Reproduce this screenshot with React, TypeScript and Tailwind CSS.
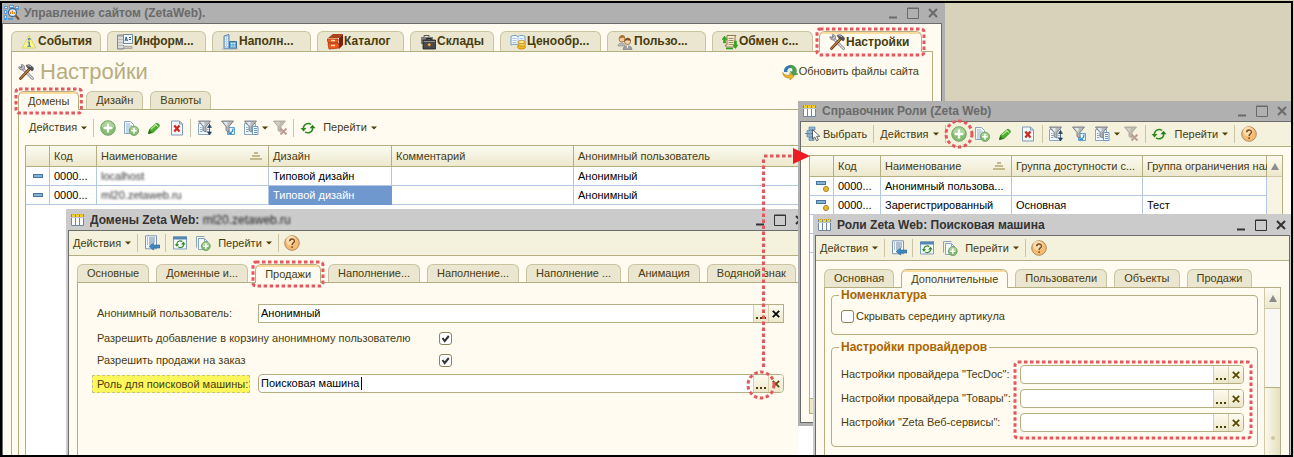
import React, { useId, type ReactNode } from "react";

/* ---------- icons ---------- */

function Svg({ children }: { children: ReactNode }) {
  return (
    <svg width="16" height="16" viewBox="0 0 16 16" aria-hidden="true" className="shrink-0">
      {children}
    </svg>
  );
}

const AppIcon = () => (
  <Svg>
    <path d="M0 1h4v3H0zM5 0h5v3H5zM11 1h4v4h-4zM0 5h3v4H0zM0 10h3v5H0zM4 13h5v2H4z" fill="#5b9bd5" />
    <path d="M1 2h2v1H1zM6 1h3v1H6zM12 2h2v1h-2zM1 6h1v2H1zM1 11h1v2H1z" fill="#d9ecfb" />
    <circle cx="8.500" cy="7.500" r="4" fill="#e8f4ff" stroke="#40698f" strokeWidth="1.300" />
    <path d="M6.500 9V6.500M8.500 9V5.500M10.500 9V7" stroke="#d98324" strokeWidth="1.200" />
    <path d="M11.500 10.500l3.500 4" stroke="#7a5230" strokeWidth="2" />
  </Svg>
);

const TableIcon = () => (
  <Svg>
    <path d="M1.500 2.500h12v11h-12z" fill="#fff" stroke="#6d87a3" />
    <path d="M5.500 3v11M9.500 3v11" stroke="#6d87a3" />
    <path d="M2 2h3v3H2zM6 2h3v3H6zM10 2h3v3h-3z" fill="#f2d02e" />
    <path d="M1 5.500h13" stroke="#b9c7d6" />
    <path d="M1 2.500h13" stroke="#c29a1a" strokeDasharray="1 1" />
  </Svg>
);

const WarnIcon = () => (
  <Svg>
    <path d="M8 1.500L14.800 14H1.200z" fill="#fbf78c" stroke="#d8d26a" strokeLinejoin="round" />
    <path d="M7.500 4.500h1.500v1.500H7.500zM6.500 8h2v4M6.300 12.300h3.800" stroke="#4a80bd" strokeWidth="1" fill="none" />
    <path d="M8.300 8v4" stroke="#4a80bd" strokeWidth="1.400" />
  </Svg>
);

const InfoIcon = () => (
  <Svg>
    <path d="M.5 1h6v14h-6z" fill="#b9b9b9" stroke="#8a8a8a" />
    <path d="M1 4h5M1 7h5M1 10h5M1 13h14M6 10.500h9" stroke="#fff" />
    <path d="M6.500.5h9v9h-9z" fill="#eef5fb" stroke="#6f8ba6" />
    <path d="M8 7l1.200-4L10.500 7M8.500 6h1.600" stroke="#2f5d8c" fill="none" />
    <path d="M12 3.500h2M12 5.500h2" stroke="#2f5d8c" />
    <path d="M7 12.500h8v2H7z" fill="#c9c9c9" stroke="#8a8a8a" strokeWidth=".6" />
  </Svg>
);

const BuildingIcon = () => (
  <Svg>
    <path d="M2 14.500V2l5-1.500v14z" fill="#b5cfe8" stroke="#5f86ad" />
    <path d="M3.500 3v10M5.500 3v10" stroke="#f2f8fd" strokeDasharray="1.500 1" />
    <path d="M7.500 7.500h7v7h-7z" fill="#6aabd4" stroke="#3c769f" />
    <path d="M9 9.500h4.500M9 12h4.500" stroke="#e6f4fc" strokeWidth="1.200" strokeDasharray="1.500 1" />
    <path d="M0 15h16" stroke="#a5b3c0" />
  </Svg>
);

const DrawerIcon = () => (
  <Svg>
    <path d="M1 4l5-4h10l-4 4z" fill="#a9431b" />
    <path d="M12 4l4-4v11l-4 4z" fill="#7d1c14" />
    <path d="M0 5h11v3.500H1zM1 9.500h11V14L2 15z" fill="#f0581c" stroke="#b3330b" strokeWidth=".8" />
    <path d="M4 6.500h4M4 11.500h4" stroke="#ffe1a6" strokeWidth="1.400" />
  </Svg>
);

const CaseIcon = () => (
  <Svg>
    <path d="M4 3V1.500h5V3" stroke="#555" fill="none" />
    <path d="M1 3h12v7H1z" fill="#7d7d7d" />
    <path d="M7 6V4.500h4V6" stroke="#222" fill="none" strokeWidth="1.200" />
    <path d="M3 6h12.500v9H3z" fill="#4a4a4a" stroke="#222" strokeWidth=".8" />
    <path d="M3.500 7.500h11.500" stroke="#8e8e8e" />
    <path d="M9.200 9l1.800 1.800-1.800 1.800-1.800-1.800z" fill="#f3b233" />
  </Svg>
);

const PriceIcon = () => (
  <Svg>
    <path d="M1 2.500C3 1 6 1 8 2.500c2-1.500 5-1.500 7 0V11c-2-1-5-1-7 0-2-1-5-1-7 0z" fill="#eff6fc" stroke="#6b9cc7" />
    <path d="M8 2.500V11M2.500 4.500h4M2.500 6.500h4M2.500 8.500h4M9.500 4.500h4" stroke="#9bbddb" strokeWidth=".8" />
    <ellipse cx="11.500" cy="13" rx="4" ry="2" fill="#f5b921" stroke="#b97a0a" strokeWidth=".7" />
    <ellipse cx="12" cy="10.500" rx="3.600" ry="1.800" fill="#fbd251" stroke="#b97a0a" strokeWidth=".7" />
    <ellipse cx="11.500" cy="8" rx="3.400" ry="1.700" fill="#fde58b" stroke="#b97a0a" strokeWidth=".7" />
  </Svg>
);

const UsersIcon = () => (
  <Svg>
    <path d="M1 12c0-4 7-4 7 0z" fill="#b8b8b8" stroke="#888" strokeWidth=".6" />
    <circle cx="5" cy="5" r="3" fill="#f5c99a" stroke="#8a5a2a" strokeWidth=".7" />
    <path d="M2 5c0-5 6-5 6-1.500C6 4 4 3 2 5z" fill="#a8702e" />
    <path d="M6 15.500c0-5 9-5 9 0z" fill="#9d9d9d" stroke="#777" strokeWidth=".6" />
    <path d="M9.500 11.500l1 3 1-3z" fill="#fff" />
    <circle cx="10.500" cy="7.500" r="3" fill="#f8d3a8" stroke="#7b4c20" strokeWidth=".7" />
    <path d="M7.500 7.500c0-5 6.500-5 6.500 0-2-1-4-2-6.500 0z" fill="#7c4e24" />
  </Svg>
);

const ExchangeIcon = () => (
  <Svg>
    <path d="M5 1.500h9c-1 1-1 2-1 3V13H5c-1.500 0-2-1-1.500-2H5z" fill="#f3ead0" stroke="#8e774c" />
    <path d="M6.500 4.500h5M6.500 6.500h5M6.500 8.500h5M6.500 10.500h5" stroke="#a08a5e" />
    <path d="M1.500 9V5.500H0L2.500 2 5 5.500H3.500V9z" fill="#35a51f" stroke="#1d9a10" strokeWidth=".5" />
    <path d="M14.500 7v4H16l-2.500 3.500L11 11h1.500V7z" fill="#35a51f" stroke="#1d9a10" strokeWidth=".5" />
    <path d="M4 14.500h7" stroke="#2f9c1c" strokeWidth="1.400" />
  </Svg>
);

const ToolsIcon = () => (
  <Svg>
    <path d="M3.500 3.500l11 11" stroke="#77777f" strokeWidth="2.600" strokeLinecap="round" />
    <path d="M4 4l10.500 10.500" stroke="#e2e2e6" strokeWidth="1.300" strokeLinecap="round" />
    <path d="M1 2.500L3 4.300 4.600 2.800 3 .8c2-.8 4.200.9 3.400 3.300-.6 1.800-3 2.400-4.400 1.200C.9 4.500.6 3.500 1 2.500z" fill="#c9c9cf" stroke="#55555c" strokeWidth=".6" />
    <path d="M11.500 5L2.500 14.500" stroke="#5a2f12" strokeWidth="2.600" strokeLinecap="round" />
    <path d="M11 5.500l-8.500 8.800" stroke="#c98446" strokeWidth="1.200" strokeLinecap="round" />
    <path d="M8 1.500c2-1.200 4-1 5.500.5l2 2-.5 2.500-1.500.3L12.500 5 10 4.500z" fill="#55555b" stroke="#333338" strokeWidth=".5" />
    <path d="M9.500 1.800c1.200-.4 2.300-.1 3.500 1" stroke="#d5d5da" strokeWidth=".9" fill="none" />
  </Svg>
);

const UpdateIcon = () => (
  <Svg>
    <circle cx="8" cy="7.500" r="6.500" fill="#e9f4f0" />
    <path d="M2 8C1.500 3 6 .5 10 1.500L8.500 4C6 4 5 6 5.500 8z" fill="#3c78b4" />
    <path d="M8 1.300c5-.5 7.500 4 6 8.200l2 .5-5 1.500L8.500 7.500l2 .6C11.500 5 10 3.500 8 3.500z" fill="#4aa54a" stroke="#2b7a39" strokeWidth=".5" />
    <path d="M.7 8.500c1 2.500 4 3.500 7.300 2.500V8.500l4 4-4 3.300v-2C4 14.500 1 12.500.7 8.500z" fill="#f0b428" stroke="#b37a0c" strokeWidth=".6" />
  </Svg>
);

const PlusGlyph = ({ cx, cy, r }: { cx: number; cy: number; r: number }) => (
  <g>
    <circle cx={cx} cy={cy} r={r} fill="#84bd70" stroke="#6f9c64" strokeWidth=".9" />
    <path d={`M${cx - r + 1} ${cy - 0.5}a${r - 1} ${r - 1} 0 0 1 ${2 * r - 2} 0z`} fill="#a9d398" />
    <path d={`M${cx - r * 0.6} ${cy}h${r * 1.2}M${cx} ${cy - r * 0.6}v${r * 1.2}`} stroke="#fff" strokeWidth={r > 5 ? 2.4 : 1.6} />
  </g>
);

const AddIcon = () => (
  <Svg>
    <PlusGlyph cx={8} cy={8} r={7.3} />
  </Svg>
);

const CopyIcon = () => (
  <Svg>
    <path d="M1.500 1.500h6l3 3v9h-9z" fill="#f3f8fc" stroke="#8aa5bf" />
    <path d="M3 4h4M3 6h6M3 8h6M3 10h4M3 12h3" stroke="#9bb3c9" />
    <PlusGlyph cx={11} cy={10.8} r={4.6} />
  </Svg>
);

const CopyFormIcon = () => (
  <Svg>
    <path d="M1.500 12.500V1.500h8" fill="none" stroke="#8aa5bf" />
    <path d="M3.500 3.500h6l3 3v8h-9z" fill="#f3f8fc" stroke="#8aa5bf" />
    <path d="M9.500 3.500v3h3" fill="none" stroke="#8aa5bf" />
    <PlusGlyph cx={10.8} cy={11.2} r={4.4} />
  </Svg>
);

const PencilIcon = () => (
  <Svg>
    <path d="M2.500 13.500l1.200-4.500 6.500-5.500c2-.5 3.500 1 3 3L7 12.500z" fill="#4bb02c" stroke="#2a8a14" strokeWidth=".8" />
    <path d="M5 9l5.500-4.500" stroke="#b4ea8f" strokeWidth="1.400" />
    <path d="M2 14l1.200-4 3 2.700z" fill="#2c6f18" />
    <path d="M9.500 4.500l3 2.500" stroke="#e0f7cf" strokeWidth=".9" />
  </Svg>
);

const DeleteIcon = () => (
  <Svg>
    <path d="M2.500 1h8l3 3v11h-11z" fill="#f4f8fc" stroke="#7f99b5" />
    <path d="M10.500 1v3h3" fill="none" stroke="#7f99b5" />
    <path d="M5.300 5.500l5.200 6M10.500 5.500l-5.200 6" stroke="#cc2a1c" strokeWidth="2.200" />
  </Svg>
);

const Funnel = ({ grey = false }: { grey?: boolean }) => (
  <g>
    <path
      d="M1.500 1h12L9 6.500v5.500l-3-1.500V6.500z"
      fill={grey ? "#bdbab0" : "#b4b9bd"}
      stroke={grey ? "#aaa79c" : "#74797e"}
      strokeWidth=".9"
    />
    <path d="M3.500 2h4v3.500H6z" fill={grey ? "#d3d0c8" : "#e4e7ea"} />
  </g>
);

const Page = () => (
  <g>
    <path d="M1.500 3.500h11v11h-11z" fill="#f3f8fc" stroke="#88a7c4" />
    <path d="M3 7.500h1.500M3 9.500h2.500M3 11.500h2.500M10 9.500h1.500M9.500 11.500h2" stroke="#88a7c4" />
  </g>
);

const FilterSetIcon = () => (
  <Svg>
    <Page />
    <Funnel />
    <path d="M12.500 6.500v6M10.500 12h4l-2 3zM10.500 7.500h4l-2-3z" fill="#24405c" stroke="#24405c" strokeWidth=".6" />
  </Svg>
);

const FilterValueIcon = () => (
  <Svg>
    <path d="M7.500 7.500h7v7h-7z" fill="#e8f4fc" stroke="#5aa0d0" />
    <path d="M10 12.500c2 0 3-1 3-4M9 10.500v3h3" stroke="#3b8bc8" strokeWidth="1.200" fill="none" />
    <Funnel />
  </Svg>
);

const FilterListIcon = () => (
  <Svg>
    <Page />
    <Funnel />
    <path d="M9.500 6.500h5.500v8H9.500z" fill="#f1f7fc" stroke="#6e9ac2" />
    <path d="M11 8.500h3M11 10.500h3M11 12.500h3" stroke="#6e9ac2" />
  </Svg>
);

const FilterOffIcon = () => (
  <Svg>
    <Funnel grey />
    <path d="M8.500 8.500l6 6M14.500 8.500l-6 6" stroke="#bd9a93" strokeWidth="1.800" />
  </Svg>
);

const RefreshGlyph = () => (
  <g>
    <path d="M3.500 9V7C4.500 3.500 8.500 2.500 11 4.500" stroke="#2d8a1d" strokeWidth="1.600" fill="none" />
    <path d="M.5 8h6l-3 3.500z" fill="#2d8a1d" />
    <path d="M12.500 8v1.800C11.500 13 7.500 13.500 5 11.800" stroke="#2d8a1d" strokeWidth="1.600" fill="none" />
    <path d="M15.500 8.300h-6l3-3.500z" fill="#2a7d1b" />
  </g>
);

const RefreshIcon = () => (
  <Svg>
    <RefreshGlyph />
  </Svg>
);

const RefreshFormIcon = () => (
  <Svg>
    <path d="M1.500 2h13v12h-13z" fill="#f4f8fb" stroke="#7f9fbc" />
    <path d="M1 1.500h14v3H1z" fill="#5586b1" />
    <g transform="translate(2.400 3.400) scale(.72)">
      <RefreshGlyph />
    </g>
  </Svg>
);

const WriteIcon = () => (
  <Svg>
    <path d="M1.500.8h11v13h-11z" fill="#f4f8fc" stroke="#7b97b4" />
    <path d="M3 3h1M5 3h6M3 5h1M5 5h6M3 7h1M5 7h6M3 9h1M5 9h3" stroke="#6c87a3" />
    <path d="M5 11.500L9.500 8v2H16v3H9.500v2z" fill="#3f86bd" stroke="#2d6a9b" strokeWidth=".6" />
  </Svg>
);

const SelectIcon = () => (
  <Svg>
    <path d="M4 1h6v3H4zM2 4.500h7v3H2zM2 8h7v3H2zM4 11.500h5v3H4z" fill="#8fb5d2" stroke="#5a85aa" strokeWidth=".7" />
    <path d="M0 7.500h3" stroke="#5a85aa" />
    <path d="M7.500 3.500v9.500l2.300-2 1.700 3.800 1.800-.8-1.700-3.700h3.200z" fill="#fff" stroke="#444" strokeWidth=".8" />
  </Svg>
);

const HelpIcon = () => (
  <Svg>
    <circle cx="8" cy="8" r="7.300" fill="#f6bc72" stroke="#b08a60" />
    <circle cx="7" cy="5.500" r="4.800" fill="#fbdcae" />
    <path d="M5.700 6.300c0-3 4.800-3 4.800-.3C10.500 8 8.100 7.800 8.100 10M8.100 11.200v1.700" stroke="#7c4f22" strokeWidth="1.500" fill="none" />
  </Svg>
);

const SortIcon = () => (
  <svg width="12" height="8" viewBox="0 0 12 8" aria-hidden="true" className="shrink-0">
    <path d="M4 0h4v2H4zM2 3h8v2H2zM0 6h12v2H0z" fill="#c3ba8c" />
  </svg>
);

const RowIcon = ({ dot = false }: { dot?: boolean }) => (
  <svg width="16" height="14" viewBox="0 0 16 14" aria-hidden="true" className="mx-auto">
    <rect x={dot ? 2.5 : 3.5} y={dot ? 2.5 : 5.5} width="9" height="3" fill="#86b3d1" stroke="#47749b" />
    {dot && <circle cx="12" cy="10" r="2.500" fill="#eebd2c" stroke="#a8801a" />}
  </svg>
);

const Caret = () => (
  <svg width="6" height="4" viewBox="0 0 6 4" aria-hidden="true" className="shrink-0">
    <path d="M0 .5h6L3 3.500z" fill="#4d3f00" />
  </svg>
);

/* ---------- callouts ---------- */

const dots = { fill: "none", stroke: "#e4575d", strokeWidth: 3, strokeDasharray: "3.500 2.500" };

function Outline({ className }: { className: string }) {
  return (
    <span className={`pointer-events-none absolute z-10 p-[2px] ${className}`}>
      <svg width="100%" height="100%" className="block overflow-visible" aria-hidden="true">
        <rect width="100%" height="100%" rx="3" {...dots} />
      </svg>
    </span>
  );
}

function Ring({ className }: { className: string }) {
  return (
    <svg viewBox="0 0 30 30" aria-hidden="true" className={`pointer-events-none absolute z-10 size-[30px] ${className}`}>
      <circle cx="15" cy="15" r="13" {...dots} />
    </svg>
  );
}

/* ---------- window chrome ---------- */

function TitleBar({ icon, children, dim = false, tall = false }: { icon: ReactNode; children: ReactNode; dim?: boolean; tall?: boolean }) {
  return (
    <header
      className={`flex shrink-0 items-center gap-1 pl-[2px] ${tall ? "h-[21px]" : "h-5"} ${
        dim ? "bg-[#b0b0b0] text-[#6a6a6a]" : "bg-[#cbcbcb] text-[#333]"
      }`}
    >
      {icon}
      <h1 className="flex-1 truncate text-[12px] leading-5 font-bold">{children}</h1>
      <span className="flex gap-2 pr-[3px]">
        <button type="button" aria-label="Свернуть">
          <svg width="12" height="12" viewBox="0 0 12 12"><path d="M2 10.500h8" stroke="currentColor" strokeWidth="2" /></svg>
        </button>
        <button type="button" aria-label="Развернуть">
          <svg width="12" height="12" viewBox="0 0 12 12"><path d="M.5 1h11v10.500H.5zM.5 1.500h11" fill="none" stroke="currentColor" /></svg>
        </button>
        <button type="button" aria-label="Закрыть">
          <svg width="12" height="12" viewBox="0 0 12 12"><path d="M2 2l8 8M10 2l-8 8" stroke="currentColor" strokeWidth="2" /></svg>
        </button>
      </span>
    </header>
  );
}

type TabItem = { label: string; icon?: ReactNode; width?: string; active?: boolean; outlined?: boolean };

function Tabs({ items, large = false }: { items: TabItem[]; large?: boolean }) {
  return (
    <nav role="tablist" className={`flex shrink-0 items-start ${large ? "h-5 gap-[6px]" : "h-[18px] gap-[7px]"}`}>
      {items.map((t, i) => (
        <div key={i} className={`relative shrink-0 ${t.width ?? ""}`}>
          <button
            type="button"
            role="tab"
            aria-selected={!!t.active}
            className={`relative flex w-full items-center overflow-hidden rounded-t-[6px] border border-b-0 px-[9px] whitespace-nowrap ${
              large ? "gap-[1px] text-[12px] font-bold" : ""
            } ${
              t.active
                ? `border-[#b5ae80] bg-[#fffbf0] ${large ? "h-[21px]" : "h-[19px]"}`
                : `border-[#c9c3a0] bg-[#ebe6cf] ${large ? "h-5" : "h-[18px]"}`
            }`}
          >
            {t.active && <span className="absolute inset-x-0 top-0 h-[2px] bg-[#fbdc9c]" />}
            {t.icon}
            {t.label}
          </button>
          {t.outlined && <Outline className="-inset-[4px] -bottom-[5px]" />}
        </div>
      ))}
    </nav>
  );
}

const Sep = () => <span className="mx-[2px] h-[18px] w-px shrink-0 bg-[#cbc5a5]" />;

function Tool({ label, children, ring = false }: { label: string; children: ReactNode; ring?: boolean }) {
  return (
    <button type="button" aria-label={label} className="relative grid h-6 w-[23px] shrink-0 place-items-center">
      {children}
      {ring && <Ring className="-top-[3px] -left-[4px]" />}
    </button>
  );
}

function MenuButton({ children }: { children: ReactNode }) {
  return (
    <button type="button" className="flex h-6 shrink-0 items-center gap-1 px-1">
      {children}
      <Caret />
    </button>
  );
}

function ListTools({ ring = false }: { ring?: boolean }) {
  return (
    <>
      <MenuButton>Действия</MenuButton>
      <Sep />
      <Tool label="Добавить" ring={ring}><AddIcon /></Tool>
      <Tool label="Скопировать"><CopyIcon /></Tool>
      <Tool label="Изменить"><PencilIcon /></Tool>
      <Tool label="Удалить"><DeleteIcon /></Tool>
      <Sep />
      <Tool label="Отбор и сортировка"><FilterSetIcon /></Tool>
      <Tool label="Отбор по значению"><FilterValueIcon /></Tool>
      <Tool label="История отборов"><FilterListIcon /></Tool>
      <Caret />
      <Tool label="Отключить отбор"><FilterOffIcon /></Tool>
      <Sep />
      <Tool label="Обновить"><RefreshIcon /></Tool>
      <MenuButton>Перейти</MenuButton>
    </>
  );
}

function FormToolbar() {
  return (
    <div className="flex h-[25px] shrink-0 items-center border-b border-[#b5ae80] bg-[#f4f1dc]">
      <MenuButton>Действия</MenuButton>
      <Sep />
      <Tool label="Записать"><WriteIcon /></Tool>
      <Sep />
      <Tool label="Перечитать"><RefreshFormIcon /></Tool>
      <Tool label="Скопировать"><CopyFormIcon /></Tool>
      <MenuButton>Перейти</MenuButton>
      <Sep />
      <Tool label="Справка"><HelpIcon /></Tool>
    </div>
  );
}

/* ---------- tables ---------- */

const th =
  "h-[21px] border-r border-b border-[#b5ae80] bg-linear-to-b from-[#fbfaf1] to-[#ede8cc] pl-1 text-left font-normal whitespace-nowrap";
const td = "h-[19px] border-r border-b border-[#b4c8e4] pl-1 whitespace-nowrap text-black";

const SortedHead = ({ children }: { children: ReactNode }) => (
  <span className="flex items-center justify-between pr-[6px]">
    {children}
    <SortIcon />
  </span>
);

const domains = ["localhost", "ml20.zetaweb.ru"];

function DomainsTable() {
  return (
    <table className="w-full table-fixed border-separate border-spacing-0">
      <thead>
        <tr>
          <th className={`${th} w-6`} />
          <th className={`${th} w-[47px]`}>Код</th>
          <th className={`${th} w-[172px]`}><SortedHead>Наименование</SortedHead></th>
          <th className={`${th} w-[123px]`}>Дизайн</th>
          <th className={`${th} w-[182px]`}>Комментарий</th>
          <th className={th}>Анонимный пользователь</th>
        </tr>
      </thead>
      <tbody>
        {domains.map((name, i) => (
          <tr key={name}>
            <td className="h-[19px] border-r border-b border-[#b4c8e4]"><RowIcon /></td>
            <td className={td}>0000...</td>
            <td className={td}><span className="text-[#333] blur-[1px]">{name}</span></td>
            <td className={i === 1 ? "h-[19px] border-r border-b border-[#6f98cf] bg-[#6f98cf] pl-1 text-white" : td}>Типовой дизайн</td>
            <td className={td} />
            <td className={td}>Анонимный</td>
          </tr>
        ))}
      </tbody>
    </table>
  );
}

const roles = [
  ["0000...", "Анонимный пользова...", "", ""],
  ["0000...", "Зарегистрированный", "Основная", "Тест"],
  ["", "", "", ""],
  ["", "", "", ""],
];

function RolesTable() {
  return (
    <table className="w-full table-fixed border-separate border-spacing-0">
      <thead>
        <tr>
          <th className={`${th} w-6`} />
          <th className={`${th} w-[47px]`}>Код</th>
          <th className={`${th} w-[131px]`}><SortedHead>Наименование</SortedHead></th>
          <th className={`${th} w-[131px]`}>Группа доступности с...</th>
          <th className={th}>Группа ограничения нал</th>
        </tr>
      </thead>
      <tbody>
        {roles.map((row, i) => (
          <tr key={i}>
            <td className="h-[19px] border-r border-b border-[#b4c8e4]">{row[0] && <RowIcon dot />}</td>
            {row.map((c, j) => (
              <td key={j} className={td}>{c}</td>
            ))}
          </tr>
        ))}
      </tbody>
    </table>
  );
}

/* ---------- form controls ---------- */

function Field({ label, value = "", square = false, wide = false, focused = false, ring = false }: {
  label: string; value?: string; square?: boolean; wide?: boolean; focused?: boolean; ring?: boolean;
}) {
  const id = useId();
  return (
    <div className="flex h-[19px] items-center">
      <div className={`shrink-0 whitespace-nowrap ${wide ? "w-[179px]" : "w-[161px]"}`}>
        <label
          htmlFor={id}
          className={focused ? "-ml-[5px] inline-block border border-dashed border-[#c9c48a] bg-[#fdf75c] pr-px pl-1 leading-4" : ""}
        >
          {label}
        </label>
      </div>
      <div className={`relative flex h-[19px] min-w-0 flex-1 border border-[#b5ae80] bg-white ${square ? "" : "rounded-[4px]"}`}>
        <input id={id} defaultValue={value} className="min-w-0 flex-1 bg-transparent pl-[2px] text-black outline-none" />
        {focused && <span className="absolute top-[2px] left-[102px] h-[13px] w-px bg-black" />}
        <button type="button" aria-label="Выбрать" className="grid w-[15px] place-items-end justify-center border-l border-[#d5cfae] bg-linear-to-b from-[#fdfbf1] to-[#ece7cb] pb-[3px]">
          <svg width="11" height="2" viewBox="0 0 11 2"><path d="M0 0h2v2H0zM4 0h2v2H4zM8 0h2v2H8z" fill="#4d3f00" /></svg>
        </button>
        <button type="button" aria-label="Очистить" className={`grid w-[15px] place-items-center border-l border-[#d5cfae] bg-linear-to-b from-[#fdfbf1] to-[#ece7cb] ${square ? "text-black" : "rounded-r-[3px] text-[#5a4800]"}`}>
          <svg width="8" height="8" viewBox="0 0 8 8"><path d="M.8.8l6.400 6.400M7.200.8L.8 7.200" stroke="currentColor" strokeWidth="1.800" /></svg>
        </button>
        {ring && <Ring className="-top-[5px] right-[7px]" />}
      </div>
    </div>
  );
}

function CheckBox({ id, checked = false }: { id: string; checked?: boolean }) {
  return (
    <span className="relative size-[13px] shrink-0">
      <input id={id} type="checkbox" defaultChecked={checked} className="peer block size-[13px] appearance-none rounded-[3px] border border-[#8f8657] bg-white" />
      <svg viewBox="0 0 13 13" aria-hidden="true" className="pointer-events-none absolute inset-0 hidden peer-checked:block">
        <path d="M3.500 6l2.200 3L9.800 4" fill="none" stroke="#333" strokeWidth="2" />
      </svg>
    </span>
  );
}

function CheckRow({ label }: { label: string }) {
  const id = useId();
  return (
    <div className="flex h-[22px] items-center">
      <label htmlFor={id} className="w-[342px] whitespace-nowrap">{label}</label>
      <CheckBox id={id} checked />
    </div>
  );
}

function Group({ title, children, className }: { title: string; children: ReactNode; className: string }) {
  return (
    <fieldset className={`rounded-[4px] border border-[#b5ae80] pr-[13px] pl-[7px] ${className}`}>
      <legend className="px-[2px] text-[12px] leading-[15px] font-bold text-[#a96500]">{title}</legend>
      {children}
    </fieldset>
  );
}

const ScrollUp = () => (
  <button type="button" aria-label="Вверх" className="grid h-[21px] w-full place-items-center border-b border-[#d0caa8] bg-linear-to-b from-[#fbfaf1] to-[#ede8cc]">
    <svg width="8" height="7" viewBox="0 0 8 7"><path d="M4 0l4 7H0z" fill="#8c8c8c" /></svg>
  </button>
);

/* ---------- windows ---------- */

const mainTabs: TabItem[] = [
  { label: "События", icon: <WarnIcon />, width: "w-[90px]" },
  { label: "Информ...", icon: <InfoIcon />, width: "w-[99px]" },
  { label: "Наполн...", icon: <BuildingIcon />, width: "w-[99px]" },
  { label: "Каталог", icon: <DrawerIcon />, width: "w-[87px]" },
  { label: "Склады", icon: <CaseIcon />, width: "w-[84px]" },
  { label: "Ценообр...", icon: <PriceIcon />, width: "w-[101px]" },
  { label: "Пользо...", icon: <UsersIcon />, width: "w-[99px]" },
  { label: "Обмен с...", icon: <ExchangeIcon />, width: "w-[101px]" },
  { label: "Настройки", icon: <ToolsIcon />, width: "w-[103px]", active: true, outlined: true },
];

function MainWindow() {
  return (
    <section className="absolute top-0 bottom-0 left-0 flex w-[943px] flex-col border-r-[3px] border-[#b0b0b0]">
      <TitleBar dim icon={<AppIcon />}>Управление сайтом (ZetaWeb).</TitleBar>
      <div className="flex min-h-0 flex-1 flex-col border-x border-t border-[#6c6c6c] bg-[#fffbf0] px-2 pt-[7px]">
        <Tabs large items={mainTabs} />
        <div className="flex min-h-0 flex-1 flex-col border-x border-t border-[#b5ae80] px-[6px]">
          <div className="flex h-[39px] shrink-0 items-center gap-[6px]">
            <ToolsIcon />
            <h2 className="flex-1 text-[22px] leading-8 text-[#b8ad80]">Настройки</h2>
            <a href="#update" className="mr-[7px] flex items-center gap-px"><UpdateIcon />Обновить файлы сайта</a>
          </div>
          <Tabs items={[{ label: "Домены", active: true, outlined: true }, { label: "Дизайн" }, { label: "Валюты" }]} />
          <div className="flex min-h-0 flex-1 flex-col border-x border-t border-[#b5ae80] px-[6px]">
            <div className="flex h-[35px] shrink-0 items-center"><ListTools /></div>
            <div className="min-h-0 flex-1 border-t border-l border-[#b5ae80] bg-white"><DomainsTable /></div>
          </div>
        </div>
      </div>
    </section>
  );
}

function DomainWindow() {
  return (
    <section className="absolute top-[206px] bottom-0 left-16 flex w-[745px] flex-col border-x-2 border-[#cbcbcb]">
      <TitleBar tall icon={<TableIcon />}>
        Домены Zeta Web: <span className="inline-block font-normal text-[#222] blur-[1px]">ml20.zetaweb.ru</span>
      </TitleBar>
      <div className="flex min-h-0 flex-1 flex-col border-x border-t border-[#6c6c6c] bg-[#fffbf0]">
        <FormToolbar />
        <div className="flex min-h-0 flex-1 flex-col px-2 pt-2">
          <Tabs
            items={[
              { label: "Основные" },
              { label: "Доменные и..." },
              { label: "Продажи", active: true, outlined: true },
              { label: "Наполнение..." },
              { label: "Наполнение..." },
              { label: "Наполнение ..." },
              { label: "Анимация" },
              { label: "Водяной знак" },
            ]}
          />
          <div className="flex-1 border-x border-t border-[#b5ae80] pt-[21px] pr-[15px] pl-[19px]">
            <Field square label="Анонимный пользователь:" value="Анонимный" />
            <div className="pt-1 pb-[3px]">
              <CheckRow label="Разрешить добавление в корзину анонимному пользователю" />
              <CheckRow label="Разрешить продажи на заказ" />
            </div>
            <Field focused ring label="Роль для поисковой машины:" value="Поисковая машина" />
          </div>
        </div>
      </div>
    </section>
  );
}

function RolesWindow() {
  return (
    <section className="absolute top-0 right-0 left-0 flex h-[325px] flex-col border-b-[3px] border-l-2 border-[#b0b0b0]">
      <TitleBar dim icon={<TableIcon />}>Справочник Роли (Zeta Web)</TitleBar>
      <div className="flex min-h-0 flex-1 flex-col border-y border-l border-[#6c6c6c] bg-[#fffbf0]">
        <div className="flex h-[25px] shrink-0 items-center border-b border-[#b5ae80] bg-[#f4f1dc]">
          <button type="button" className="flex h-6 items-center gap-[2px] px-1"><SelectIcon />Выбрать</button>
          <Sep />
          <ListTools ring />
          <Sep />
          <Tool label="Справка"><HelpIcon /></Tool>
        </div>
        <div className="flex min-h-0 flex-1 p-2">
          <div className="flex flex-1 flex-col border border-[#b5ae80] bg-white">
            <div className="flex min-h-0 flex-1">
              <div className="min-w-0 flex-1"><RolesTable /></div>
              <div className="w-[15px] bg-[#f7f4e4]"><ScrollUp /></div>
            </div>
            <div className="h-[15px] border-t border-[#b5ae80] bg-[#ede8cc]" />
          </div>
        </div>
      </div>
    </section>
  );
}

function RoleWindow() {
  const id = useId();
  return (
    <section className="absolute top-[113px] right-0 bottom-0 left-[15px] flex flex-col border-r border-l-2 border-[#cbcbcb]">
      <TitleBar tall icon={<TableIcon />}>Роли Zeta Web: Поисковая машина</TitleBar>
      <div className="flex min-h-0 flex-1 flex-col border-x border-t border-[#6c6c6c] bg-[#fffbf0]">
        <FormToolbar />
        <div className="flex min-h-0 flex-1 flex-col px-2 pt-2">
          <Tabs
            items={[
              { label: "Основная" },
              { label: "Дополнительные", active: true },
              { label: "Пользователи" },
              { label: "Объекты" },
              { label: "Продажи" },
            ]}
          />
          <div className="flex min-h-0 flex-1 border-x border-t border-[#b5ae80]">
            <div className="min-w-0 flex-1 px-[6px]">
              <Group title="Номенклатура" className="h-[47px]">
                <div className="flex items-center gap-[2px] pt-[7px] pl-[2px]">
                  <CheckBox id={id} />
                  <label htmlFor={id} className="leading-[13px]">Скрывать середину артикула</label>
                </div>
              </Group>
              <Group title="Настройки провайдеров" className="mt-[5px] h-[107px]">
                <div className="relative mt-[10px] flex flex-col gap-[5px] pl-[2px]">
                  <Field wide label={'Настройки провайдера "TecDoc":'} />
                  <Field wide label={'Настройки провайдера "Товары":'} />
                  <Field wide label={'Настройки "Zeta Веб-сервисы":'} />
                  <Outline className="-top-[5px] -right-[9px] -bottom-[8px] left-[174px]" />
                </div>
              </Group>
            </div>
            <div className="flex w-4 flex-col border-l border-[#d0caa8] bg-[#f9f8f4]">
              <ScrollUp />
              <div className="mt-[78px] grid flex-1 place-items-center border-t border-[#b5ae80] bg-linear-to-r from-[#faf8ec] to-[#e6e0bd] pt-8">
                <span className="size-1 rounded-full bg-[#cfc9a6]" />
              </div>
            </div>
          </div>
        </div>
      </div>
    </section>
  );
}

export default function App() {
  return (
    <main className="h-screen overflow-hidden bg-[#d8d2bb] pt-px pr-px font-['Liberation_Sans',Arial,sans-serif] text-[11px] leading-[15px] text-[#483c10]">
      <div className="relative h-full overflow-hidden border-2 border-black">
        <MainWindow />
        <DomainWindow />
        <div className="absolute top-[98px] right-0 bottom-0 left-[796px] bg-white">
          <RolesWindow />
          <RoleWindow />
        </div>
        <svg width="60" height="230" viewBox="0 0 60 230" aria-hidden="true" className="pointer-events-none absolute top-[143px] left-[753px]">
          <path d="M8.500 221V12M9 10h31" {...dots} />
          <path d="M38 2l17 8-17 8z" fill="#ed1c24" />
        </svg>
      </div>
    </main>
  );
}
